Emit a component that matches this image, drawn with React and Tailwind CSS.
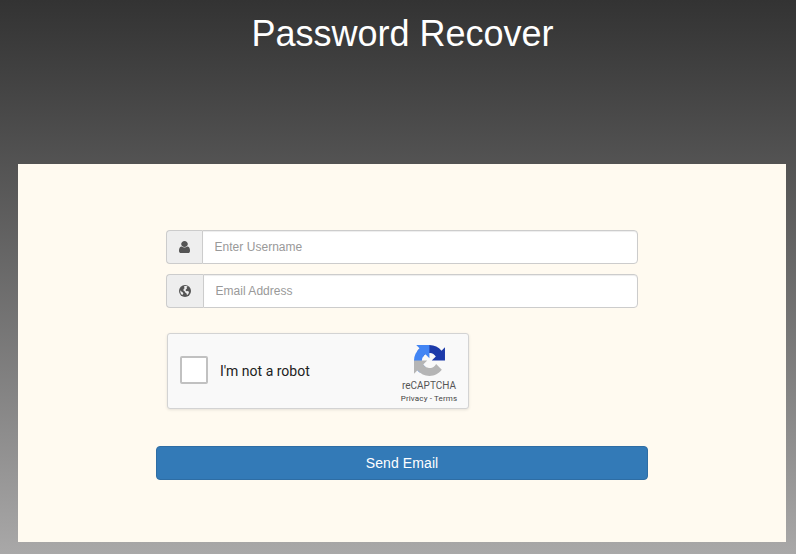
import React from "react";

function UserIcon() {
  return (
    <svg viewBox="256 128 1280 1536" preserveAspectRatio="none" className="h-3 w-[11px] fill-[#555]">
      <path d="M1536 1399q0 109-62.5 187t-150.5 78h-854q-88 0-150.5-78t-62.5-187q0-85 8.5-160.5t31.5-152 58.5-131 94-89 134.5-34.5q131 128 313 128t313-128q76 0 134.5 34.5t94 89 58.5 131 31.5 152 8.5 160.5zm-256-887q0 159-112.5 271.5t-271.5 112.5-271.5-112.5-112.5-271.5 112.5-271.5 271.5-112.5 271.5 112.5 112.5 271.5z" />
    </svg>
  );
}

function GlobeIcon() {
  return (
    <svg viewBox="0 0 12 12" className="h-3 w-3">
      <circle cx="6" cy="6" r="6" fill="#555" />
      <path
        d="M5.4 1.1 7.4 1 8.6 1.8 7.6 2.6 8 3.6 6.8 4.6 6.6 5.6 7.6 6.2 9 6 10 7 9.6 8.6 8.4 10 7.8 9.6 7.4 8.2 6.2 7.4 5.6 6.2 4.4 5.4 4.6 4 5.8 3 5 2.2ZM1.1 5.2 2.4 6.6 3.6 7.2 4.4 8.4 3.8 9.6 3 10 1.6 8.2Z"
        fill="#eee"
      />
    </svg>
  );
}

function RecaptchaLogo() {
  return (
    <svg viewBox="0 0 64 64" className="h-[31px] w-[31px]">
      <path fill="#1c3aa9" d="M64 31.955l-.033-1.37V4.687l-7.16 7.16C50.948 4.674 42.033.093 32.05.093c-10.4 0-19.622 4.96-25.458 12.64l11.736 11.86a15.55 15.55 0 0 1 4.754-5.334c2.05-1.6 4.952-2.906 8.968-2.906.485 0 .86.057 1.135.163 4.976.393 9.288 3.14 11.828 7.124l-8.307 8.307L64 31.953" />
      <path fill="#4285f4" d="M31.862.094l-1.37.033H4.594l7.16 7.16C4.58 13.147 0 22.06 0 32.046c0 10.4 4.96 19.622 12.64 25.458L24.5 45.768a15.55 15.55 0 0 1-5.334-4.754c-1.6-2.05-2.906-4.952-2.906-8.968 0-.485.057-.86.163-1.135.393-4.976 3.14-9.288 7.124-11.828l8.307 8.307L31.86.095" />
      <path fill="#b5b5b5" d="M.001 32.045l.033 1.37v25.898l7.16-7.16c5.86 7.173 14.774 11.754 24.76 11.754 10.4 0 19.622-4.96 25.458-12.64l-11.736-11.86a15.55 15.55 0 0 1-4.754 5.334c-2.05 1.6-4.952 2.906-8.968 2.906-.485 0-.86-.057-1.135-.163-4.976-.393-9.288-3.14-11.828-7.124l8.307-8.307c-10.522.04-22.4.066-27.295-.005" />
    </svg>
  );
}

function Field({ icon, placeholder, type, addonClass }) {
  return (
    <div className="flex h-[34px] w-[472px]">
      <span className={`flex shrink-0 items-center justify-center rounded-l border border-r-0 border-[#ccc] bg-[#eee] ${addonClass}`}>
        {icon}
      </span>
      <input
        type={type}
        placeholder={placeholder}
        className="min-w-0 flex-1 rounded-r border border-[#ccc] bg-white px-[11.5px] pb-px text-[12px] tracking-[0.03px] text-[#555] shadow-[inset_0_1px_1px_rgba(0,0,0,0.075)] outline-none placeholder:text-[#999]"
      />
    </div>
  );
}

function Recaptcha() {
  return (
    <div className="mt-[25px] ml-px flex h-[76px] w-[302px] rounded-[3px] border border-[#d3d3d3] bg-[#f9f9f9] pl-3 font-['Roboto',sans-serif] shadow-[0_1px_3px_rgba(0,0,0,0.1)]">
      <span className="mt-[22px] h-7 w-7 shrink-0 rounded-[2px] border-2 border-[#c1c1c1] bg-white" />
      <span className="mt-[29px] ml-3 text-[14px] leading-[17px] text-[#222]">I'm not a robot</span>
      <div className="ml-auto flex h-full w-[78px] flex-col items-center pt-[11px]">
        <RecaptchaLogo />
        <span className="mt-[4px] text-[10px] leading-[11px] text-[#555]">reCAPTCHA</span>
        <span className="mt-[3px] text-[8px] leading-[10px] tracking-[0.15px] whitespace-pre text-[#444]">Privacy - Terms</span>
      </div>
    </div>
  );
}

export default function App() {
  return (
    <main className="h-[554px] w-[796px] overflow-hidden bg-linear-to-b from-[#333] to-[#a9a8a8] pr-[10px] pl-[18px] font-['Liberation_Sans',Arial,sans-serif]">
      <h1 className="h-[164px] pt-[14px] pl-px text-center text-[36px] leading-[40px] text-white">Password Recover</h1>
      <form className="h-[378px] bg-[#fffaf0] px-[138px] pt-[66px]">
        <div className="flex flex-col gap-[10px] px-[10px]">
          <Field icon={<UserIcon />} type="text" placeholder="Enter Username" addonClass="w-[36px]" />
          <Field icon={<GlobeIcon />} type="email" placeholder="Email Address" addonClass="w-[37px]" />
        </div>
        <div className="px-[10px]">
          <Recaptcha />
        </div>
        <button type="button" className="mt-[37px] block h-[34px] w-full rounded border border-[#2e6da4] bg-[#337ab7] text-[14px] leading-5 tracking-[0.1px] text-white">
          Send Email
        </button>
      </form>
    </main>
  );
}
